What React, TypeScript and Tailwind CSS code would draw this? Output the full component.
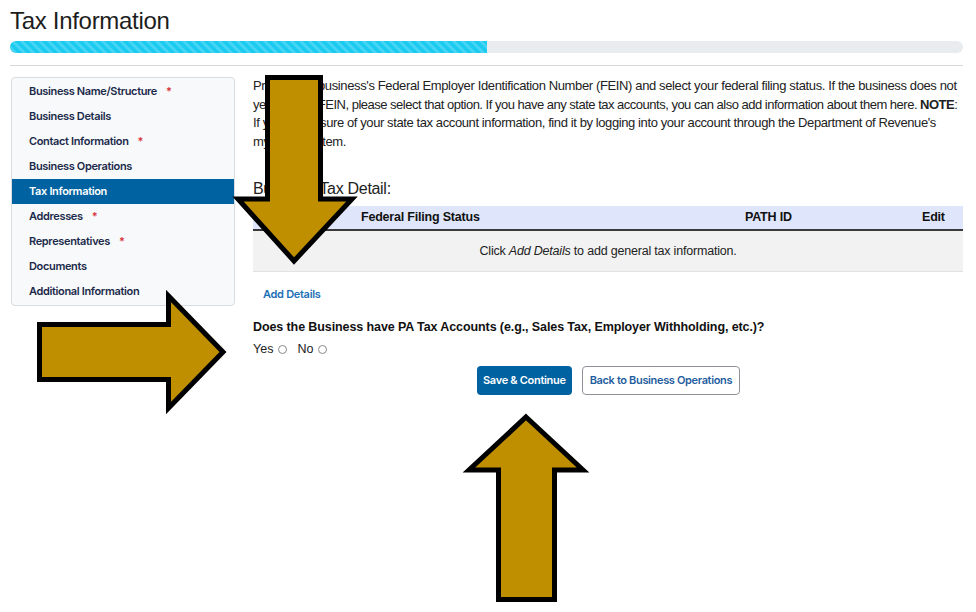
import React from "react";

const steps = [
  { label: "Business Name/Structure", required: true },
  { label: "Business Details" },
  { label: "Contact Information", required: true },
  { label: "Business Operations" },
  { label: "Tax Information", active: true },
  { label: "Addresses", required: true },
  { label: "Representatives", required: true },
  { label: "Documents" },
  { label: "Additional Information" },
];

const Arrows = () => (
  <svg
    className="absolute left-0 top-0 pointer-events-none"
    width={976}
    height={612}
    viewBox="0 0 976 612"
  >
    <g fill="#bf8f00" stroke="#000" strokeWidth={5} strokeLinejoin="miter">
      <polygon points="267.5,77.5 320.5,77.5 320.5,199 352,199 294,261 238,199 267.5,199" />
      <polygon points="39.5,324.5 168.5,324.5 168.5,296 223,352 168.5,408 168.5,379.5 39.5,379.5" />
      <polygon points="526,417 583,470 554.5,470 554.5,599.5 498.5,599.5 498.5,470 469,470" />
    </g>
  </svg>
);

const Radio = () => (
  <span className="inline-block w-[9px] h-[9px] rounded-full border border-[#8a8a8a] bg-white ml-[5px] align-middle" />
);

export default function App() {
  return (
    <div className="relative w-[976px] h-[612px] bg-white overflow-hidden font-['Liberation_Sans',Arial,sans-serif] text-[#212529]">
      <div className="px-[10px] pt-[6px]">
        <h1 className="text-[24px] leading-[30px] text-[#1d1d1d] tracking-[-0.3px]">Tax Information</h1>
        <div className="mt-[5px] h-[12px] w-[953px] rounded-full bg-[#e9ecef] overflow-hidden">
          <div className="h-full w-[477px] bg-[#1ccbf0] bg-[linear-gradient(45deg,rgba(255,255,255,0.18)_25%,transparent_25%,transparent_50%,rgba(255,255,255,0.18)_50%,rgba(255,255,255,0.18)_75%,transparent_75%,transparent)] bg-size-[9px_9px]" />
        </div>
        <div className="mt-[12px] h-px w-[953px] bg-[#d6d9dc]" />

        <div className="flex mt-[11px]">
          <nav className="w-[224px] ml-px shrink-0 self-start rounded-[4px] border border-[#d9dce0] bg-[#f8f9fb] py-px font-['Inter',sans-serif]">
            {steps.map((s) => (
              <div
                key={s.label}
                className={
                  s.active
                    ? "h-[25px] flex items-center pl-[17px] bg-[#0062a0] text-white text-[11px] font-semibold tracking-[-0.35px]"
                    : "h-[25px] flex items-center pl-[17px] text-[#1b2a4a] text-[11px] font-semibold tracking-[-0.35px]"
                }
              >
                {s.label}
                {s.required && <span className="text-[#d9363e] ml-[9px] text-[11px]">*</span>}
              </div>
            ))}
          </nav>

          <main className="ml-[18px] w-[710px]">
            <div className="text-[13px] leading-[18.5px] text-[#222] tracking-[-0.4px]">
              <div className="whitespace-nowrap tracking-[-0.37px]">
                Provide the business's Federal Employer Identification Number (FEIN) and select your federal filing status. If the business does not
              </div>
              <div className="whitespace-nowrap tracking-[-0.5px]">
                yet have an FEIN, please select that option. If you have any state tax accounts, you can also add information about them here. <b>NOTE</b>:
              </div>
              <div className="whitespace-nowrap">
                If you are unsure of your state tax account information, find it by logging into your account through the Department of Revenue's
              </div>
              <div className="whitespace-nowrap">myPATH system.</div>
            </div>

            <h2 className="mt-[28px] text-[16px] leading-[20px] text-[#222] tracking-[-0.3px]">Business Tax Detail:</h2>

            <div className="mt-[7px]">
              <div className="h-[25px] flex items-center bg-[#dfe6fb] border-b-2 border-[#3a3a3a] text-[12.5px] font-bold text-[#111] tracking-[-0.2px]">
                <div className="w-[108px] pl-[12px]">FEIN</div>
                <div className="w-[384px]">Federal Filing Status</div>
                <div className="w-[177px]">PATH ID</div>
                <div>Edit</div>
              </div>
              <div className="h-[41px] flex items-center justify-center bg-[#f2f2f2] border-b border-[#e2e2e2] text-[12.5px] text-[#222] tracking-[-0.2px]">
                <span>
                  Click <i>Add Details</i> to add general tax information.
                </span>
              </div>
            </div>

            <div className="mt-[14px] pl-[10px] font-['Inter',sans-serif] text-[11px] font-semibold text-[#1c6fb4] tracking-[-0.3px]">
              Add Details
            </div>

            <div className="mt-[15px] text-[12.5px] font-bold text-[#111] tracking-[-0.1px]">
              Does the Business have PA Tax Accounts (e.g., Sales Tax, Employer Withholding, etc.)?
            </div>
            <div className="mt-[4px] text-[12.5px] text-[#222] flex items-center">
              <span>Yes</span>
              <Radio />
              <span className="ml-[10px]">No</span>
              <Radio />
            </div>

            <div className="mt-[7px] flex gap-[10px] pl-[224px] font-['Inter',sans-serif]">
              <button className="h-[29px] px-[6px] rounded-[4px] bg-[#0062a0] text-white text-[11px] font-semibold tracking-[-0.3px]">
                Save &amp; Continue
              </button>
              <button className="h-[29px] px-[7px] rounded-[4px] border border-[#8f9398] bg-white text-[#1f5e9e] text-[11px] font-semibold tracking-[-0.35px]">
                Back to Business Operations
              </button>
            </div>
          </main>
        </div>
      </div>
      <Arrows />
    </div>
  );
}
